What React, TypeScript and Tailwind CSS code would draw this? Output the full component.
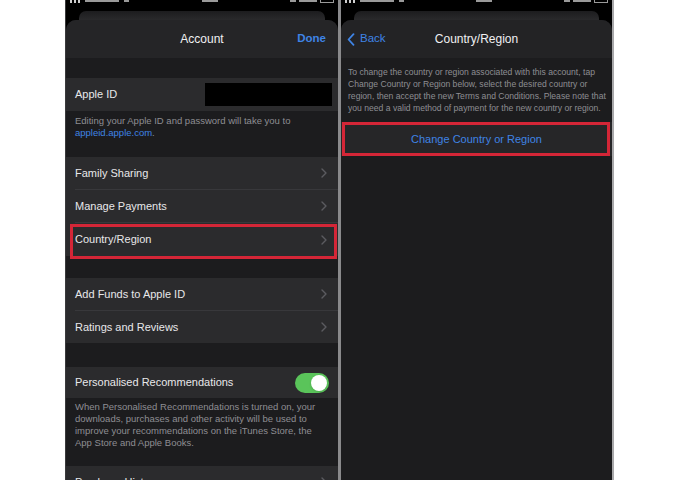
import React from "react";

const BLUE = "text-[#3f84e5]";

// Only the lower edge of the status bar glyphs shows in the picture
function StatusBar() {
  return (
    <div className="flex h-[11px] items-start justify-between bg-black px-[4px]">
      <div className="flex items-start gap-[2px]">
        <div className="h-[3px] w-[2px] bg-[#cfcfcf]" />
        <div className="h-[3px] w-[2px] bg-[#cfcfcf]" />
        <div className="h-[3px] w-[2px] bg-[#cfcfcf]" />
        <div className="ml-[3px] h-[2px] w-[34px] bg-[#9a9a9a]" />
        <div className="ml-[3px] h-[2px] w-[5px] bg-[#9a9a9a]" />
      </div>
      <div className="h-[2px] w-[16px] bg-[#9a9a9a]" />
      <div className="flex items-start gap-[3px]">
        <div className="h-[2px] w-[6px] bg-[#9a9a9a]" />
        <div className="h-[2px] w-[18px] bg-[#9a9a9a]" />
        <div className="h-[3px] w-[14px] border-b border-x border-[#9a9a9a]" />
      </div>
    </div>
  );
}

function SheetTop() {
  return (
    <>
      <StatusBar />
      <div className="bg-black px-[13px]">
        <div className="h-[9px] rounded-t-[7px] bg-gradient-to-b from-[#1c1c1e] to-[#2a2a2c]" />
      </div>
    </>
  );
}

function Chevron() {
  return (
    <svg width="6" height="10" viewBox="0 0 6 10" className="shrink-0">
      <path d="M1 1l4 4-4 4" fill="none" stroke="#5b5b60" strokeWidth="1.4" strokeLinecap="round" strokeLinejoin="round" />
    </svg>
  );
}

function Row({ label, h = "h-[33px]", last = false }: { label: string; h?: string; last?: boolean }) {
  return (
    <div className={`flex ${h} shrink-0 items-center bg-[#2b2b2d] pl-[9px]`}>
      <div className={`flex h-full flex-1 items-center justify-between pr-[11px] ${last ? "" : "border-b border-[#38383b]"}`}>
        <span className="text-[11px] text-[#e8e8ea]">{label}</span>
        <Chevron />
      </div>
    </div>
  );
}

function Toggle() {
  return (
    <div className="flex h-[20px] w-[34px] items-center justify-end rounded-full bg-[#5ac45a] p-[2px]">
      <div className="h-[16px] w-[16px] rounded-full bg-white shadow" />
    </div>
  );
}

function AccountPhone() {
  return (
    <div className="flex w-[273px] shrink-0 flex-col border-l border-[#3a3a3c] bg-black">
      <SheetTop />
      <div className="flex min-h-0 flex-1 flex-col overflow-hidden rounded-t-[10px] bg-[#1c1c1e]">
        <div className="grid h-[38px] shrink-0 grid-cols-[1fr_auto_1fr] items-center bg-[#252527] px-[12px]">
          <span />
          <span className="text-[12px] text-[#f0f0f2]">Account</span>
          <span className={`justify-self-end text-[11.5px] font-bold ${BLUE}`}>Done</span>
        </div>
        <div className="h-[20px] shrink-0" />
        <div className="flex h-[33px] shrink-0 items-center justify-between bg-[#2b2b2d] pl-[9px] pr-[6px]">
          <span className="text-[11px] text-[#e8e8ea]">Apple ID</span>
          <div className="h-[23px] w-[127px] bg-black" />
        </div>
        <div className="h-[46px] shrink-0 px-[9px] pt-[4px] text-[9.5px] leading-[12px] text-[#8e8e93]">
          <div>Editing your Apple ID and password will take you to</div>
          <div>
            <span className={BLUE}>appleid.apple.com</span>.
          </div>
        </div>
        <Row label="Family Sharing" />
        <Row label="Manage Payments" />
        <div className="relative shrink-0">
          <Row label="Country/Region" last />
          <div className="absolute -bottom-[3px] left-[4px] right-[1px] top-[1px] border-[3px] border-[#d42637]" />
        </div>
        <div className="h-[22px] shrink-0" />
        <Row label="Add Funds to Apple ID" />
        <Row label="Ratings and Reviews" h="h-[32px]" last />
        <div className="h-[24px] shrink-0" />
        <div className="flex h-[31px] shrink-0 items-center justify-between bg-[#2b2b2d] pl-[9px] pr-[9px]">
          <span className="text-[11px] text-[#e8e8ea]">Personalised Recommendations</span>
          <Toggle />
        </div>
        <div className="h-[68px] shrink-0 px-[9px] pt-[3px] text-[9.5px] leading-[12px] text-[#8e8e93]">
          <div>When Personalised Recommendations is turned on, your</div>
          <div>downloads, purchases and other activity will be used to</div>
          <div>improve your recommendations on the iTunes Store, the</div>
          <div>App Store and Apple Books.</div>
        </div>
        <Row label="Purchase History" />
      </div>
    </div>
  );
}

function CountryPhone() {
  return (
    <div className="flex w-[271px] shrink-0 flex-col bg-black">
      <SheetTop />
      <div className="flex min-h-0 flex-1 flex-col overflow-hidden rounded-t-[10px] bg-[#1c1c1e]">
        <div className="grid h-[38px] shrink-0 grid-cols-[1fr_auto_1fr] items-center bg-[#232325] px-[6px]">
          <span className={`flex items-center gap-[5px] text-[11.5px] ${BLUE}`}>
            <svg width="8" height="13" viewBox="0 0 8 13">
              <path d="M6.5 1.2L1.6 6.5l4.9 5.3" fill="none" stroke="#3f84e5" strokeWidth="1.8" strokeLinecap="round" strokeLinejoin="round" />
            </svg>
            Back
          </span>
          <span className="text-[12px] text-[#f0f0f2]">Country/Region</span>
          <span />
        </div>
        <div className="whitespace-nowrap px-[7px] pt-[8px] text-[8.6px] leading-[12px] text-[#8e8e93]">
          <div>To change the country or region associated with this account, tap</div>
          <div>Change Country or Region below, select the desired country or</div>
          <div>region, then accept the new Terms and Conditions. Please note that</div>
          <div>you need a valid method of payment for the new country or region.</div>
        </div>
        <div className="relative mt-[8px] flex h-[34px] shrink-0 items-center justify-center bg-[#262628]">
          <span className={`text-[11px] ${BLUE}`}>Change Country or Region</span>
          <div className="absolute inset-y-0 left-[1px] right-[2px] border-[3px] border-[#d42637]" />
        </div>
      </div>
    </div>
  );
}

export default function App() {
  return (
    <div className="flex h-[480px] w-[680px] overflow-hidden bg-white font-['Liberation_Sans',Arial,sans-serif]">
      <div className="w-[65px] shrink-0" />
      <AccountPhone />
      <div className="w-[3px] shrink-0 bg-[#8a8a8c]" />
      <CountryPhone />
      <div className="w-[2px] shrink-0 bg-[#a8a8aa]" />
    </div>
  );
}
